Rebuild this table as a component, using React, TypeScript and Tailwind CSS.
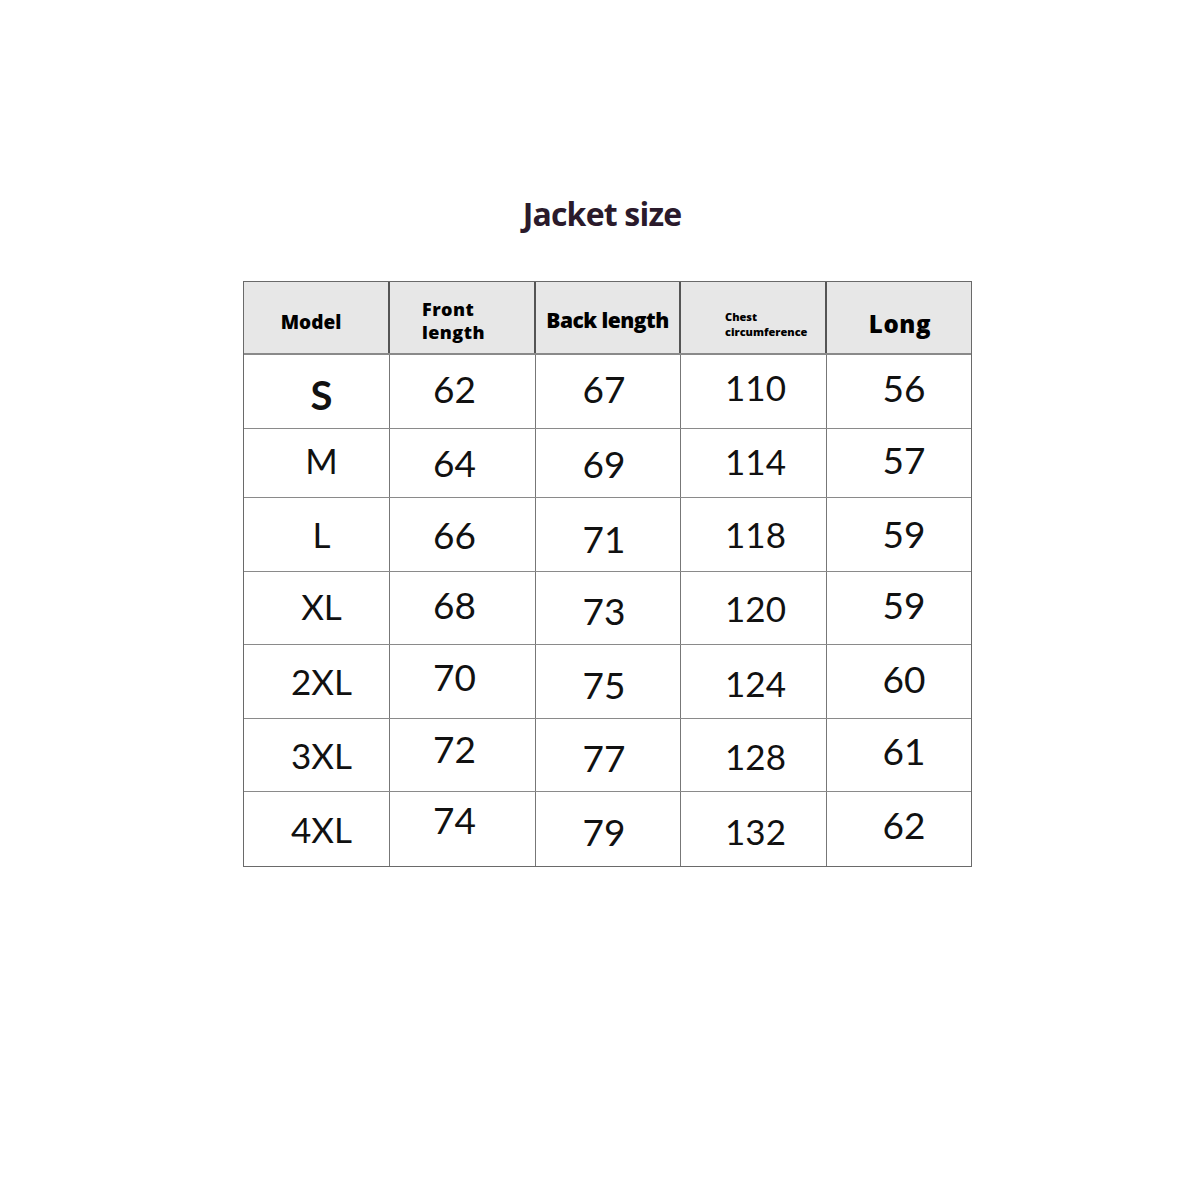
const rows: { size: string; cells: string[] }[] = [
  { size: "S", cells: ["62", "67", "110", "56"] },
  { size: "M", cells: ["64", "69", "114", "57"] },
  { size: "L", cells: ["66", "71", "118", "59"] },
  { size: "XL", cells: ["68", "73", "120", "59"] },
  { size: "2XL", cells: ["70", "75", "124", "60"] },
  { size: "3XL", cells: ["72", "77", "128", "61"] },
  { size: "4XL", cells: ["74", "79", "132", "62"] },
];

// row heights taken from the picture
const rowH = ["h-[74px]", "h-[69px]", "h-[74px]", "h-[73px]", "h-[74px]", "h-[73px]", "h-[74px]"];

// the figures in the picture are not quite centred: nudge each one
const nudge = [
  ["translate-y-[3px]", "-translate-y-[3px]", "-translate-y-[3px]", "-translate-y-[4px]", "-translate-y-[4px]"],
  ["-translate-y-[3px]", "translate-y-0", "translate-y-[1px]", "-translate-y-[2px]", "-translate-y-[3px]"],
  ["translate-y-0", "translate-y-0", "translate-y-[4px]", "translate-y-0", "-translate-y-[1px]"],
  ["-translate-y-[2px]", "-translate-y-[3px]", "translate-y-[3px]", "translate-y-0", "-translate-y-[3px]"],
  ["translate-y-0", "-translate-y-[5px]", "translate-y-[3px]", "translate-y-[2px]", "-translate-y-[3px]"],
  ["translate-y-0", "-translate-y-[6px]", "translate-y-[3px]", "translate-y-[1px]", "-translate-y-[4px]"],
  ["translate-y-0", "-translate-y-[9px]", "translate-y-[3px]", "translate-y-[2px]", "-translate-y-[4px]"],
];

// horizontal placement per column
const colX = ["pl-[10px]", "pr-[16px]", "pr-[8px]", "pl-[4px]", "pl-[8px]"];

export default function App() {
  return (
    <div className="w-[1200px] h-[1200px] bg-white" style={{ fontFamily: "Lato, 'Open Sans', sans-serif" }}>
      <div className="pt-[192px] pl-[243px]">
        <h1 className="w-[718px] text-center text-[32px] leading-[44px] font-bold text-[#2b1a2b] tracking-tight" style={{ fontFamily: "'Open Sans', sans-serif" }}>
          Jacket size
        </h1>

        <div className="mt-[45px] w-[729px] border border-[#6a6a6a]">
          {/* header */}
          <div className="grid grid-cols-[146px_146px_145px_146px_146px] h-[73px] bg-[#e7e7e7] text-black font-extrabold border-b-2 border-[#8a8a8a]" style={{ fontFamily: "'Open Sans', sans-serif" }}>
            <div className="flex items-center justify-center pt-[10px] pr-[10px] text-[19px] border-r-2 border-[#555]">Model</div>
            <div className="flex flex-col justify-center pl-[32px] pt-[6px] text-[18px] leading-[23px] tracking-wide border-r-2 border-[#555]">
              <span>Front</span>
              <span>length</span>
            </div>
            <div className="flex items-center justify-center pt-[6px] text-[21px] tracking-tight border-r-2 border-[#555]">Back length</div>
            <div className="flex flex-col justify-center pl-[44px] pt-[12px] text-[11px] leading-[15px] border-r-2 border-[#555]">
              <span>Chest</span>
              <span>circumference</span>
            </div>
            <div className="flex items-center justify-center pt-[12px] text-[24px] tracking-wide">Long</div>
          </div>

          {rows.map((r, i) => (
            <div
              key={r.size}
              className={`grid grid-cols-[146px_146px_145px_146px_146px] ${rowH[i]} text-[#111] text-[37px] ${i < rows.length - 1 ? "border-b border-[#8a8a8a]" : ""}`}
            >
              <div className={`flex items-center justify-center ${colX[0]} border-r border-[#777] ${i === 0 ? "font-bold text-[40px]" : "text-[35px]"}`}>
                <span className={nudge[i][0]}>{r.size}</span>
              </div>
              {r.cells.map((c, j) => (
                <div
                  key={j}
                  className={`flex items-center justify-center ${colX[j + 1]} ${j === 2 ? "text-[35px]" : ""} ${j < 3 ? "border-r border-[#777]" : ""}`}
                >
                  <span className={nudge[i][j + 1]}>{c}</span>
                </div>
              ))}
            </div>
          ))}
        </div>
      </div>
    </div>
  );
}
